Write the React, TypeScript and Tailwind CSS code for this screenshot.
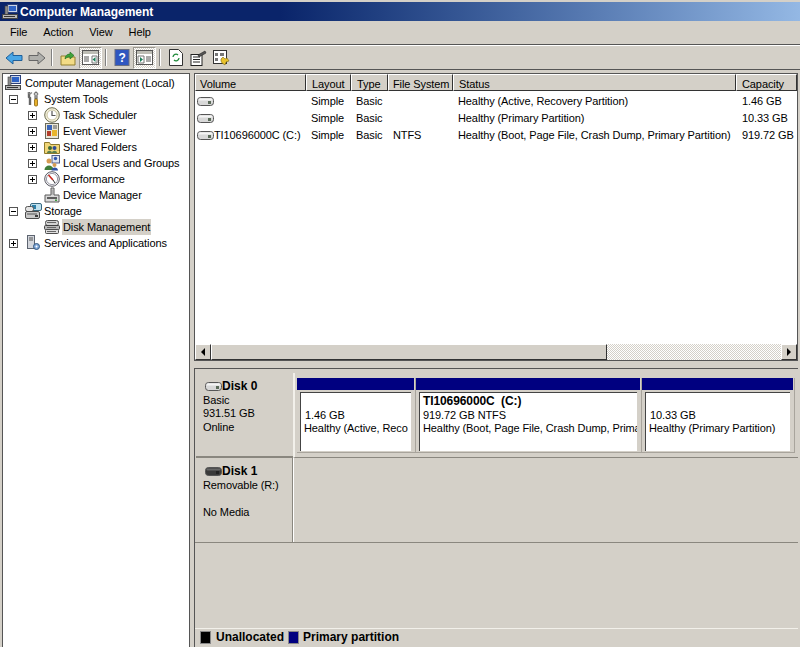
import type { ReactNode } from 'react'

const font = 'font-["Liberation_Sans",Arial,sans-serif]'

/** Small hard drive glyph used in the volume list and the disk labels */
function DriveIcon({ dark = false }: { dark?: boolean }) {
  return (
    <svg width="17" height="9" viewBox="0 0 17 9" className="shrink-0">
      <rect x="0.5" y="0.5" width="16" height="8" rx="3" fill={dark ? '#3a3a3a' : '#d8d8d8'} stroke="#555" />
      <rect x="1.5" y="1.5" width="14" height="2" rx="1" fill={dark ? '#666' : '#f4f4f4'} />
      <rect x="11" y="4" width="3" height="3" fill={dark ? '#222' : '#5a6a58'} />
    </svg>
  )
}

function Computer() {
  return (
    <svg width="17" height="16" viewBox="0 0 17 16">
      <rect x="5.5" y="0.5" width="10" height="8" fill="#c9d3e6" stroke="#2b3f78" />
      <rect x="7" y="2" width="7" height="5" fill="#2e62c4" />
      <rect x="3" y="2" width="3" height="10" fill="#8b8b8b" stroke="#444" strokeWidth="0.6" />
      <rect x="0.5" y="10.5" width="15" height="4" fill="#b9b9b9" stroke="#444" />
      <path d="M2 12.5h11" stroke="#333" />
    </svg>
  )
}

function Tools() {
  return (
    <svg width="16" height="16" viewBox="0 0 16 16">
      <path d="M4 1v5l1 1v7" stroke="#666" strokeWidth="2.4" fill="none" />
      <path d="M3 1.5 5 3 7 1.5" stroke="#888" strokeWidth="1.2" fill="none" />
      <path d="M11 1a2 2 0 0 1 1 3.5V8h-2V4.500A2 2 0 0 1 11 1z" fill="#c8c8c8" stroke="#555" />
      <rect x="9.500" y="8" width="3" height="7" rx="1" fill="#e7b02c" stroke="#8a6410" strokeWidth="0.8" />
    </svg>
  )
}

function Clock() {
  return (
    <svg width="16" height="16" viewBox="0 0 16 16">
      <circle cx="8" cy="8" r="7.300" fill="#f3efd9" stroke="#6d6d50" />
      <circle cx="8" cy="8" r="5" fill="#fff" stroke="#c9c4a0" />
      <path d="M8 4v4.500h3.500" stroke="#555" strokeWidth="1.200" fill="none" />
    </svg>
  )
}

function EventLog() {
  return (
    <svg width="16" height="16" viewBox="0 0 16 16">
      <rect x="1.500" y="0.500" width="13" height="15" fill="#e9e6d6" stroke="#6a6a5a" />
      <rect x="3" y="2" width="5" height="5" fill="#3c66b8" />
      <rect x="8" y="7" width="5" height="6" fill="#e8b52c" />
      <rect x="3" y="8" width="4" height="5" fill="#b33d2a" />
      <path d="M9 3h4M9 5h4" stroke="#555" />
    </svg>
  )
}

function SharedFolder() {
  return (
    <svg width="16" height="16" viewBox="0 0 16 16">
      <path d="M0.500 3.500h5l1 2h9v9h-15z" fill="#f0d678" stroke="#8f7a2c" />
      <circle cx="6" cy="9" r="2" fill="#3d6a35" />
      <circle cx="10.500" cy="9" r="2" fill="#2f4d9a" />
      <path d="M3 14c0-3 5-3 5 0zM8 14c0-3 5-3 5 0z" fill="#5a7f4d" />
    </svg>
  )
}

function Users() {
  return (
    <svg width="16" height="16" viewBox="0 0 16 16">
      <rect x="8" y="0.500" width="7.500" height="7.500" fill="#dfe4ef" stroke="#4c5a88" />
      <circle cx="11.500" cy="3.500" r="1.700" fill="#2f55ad" />
      <circle cx="5" cy="6" r="2.500" fill="#d69b52" />
      <path d="M0.500 15c0-6 9-6 9 0z" fill="#3f7d3a" />
      <circle cx="10.500" cy="10" r="2" fill="#d69b52" />
      <path d="M7.500 15.500c0-4 6.500-4 6.500 0z" fill="#2e4fa3" />
    </svg>
  )
}

function Gauge() {
  return (
    <svg width="16" height="16" viewBox="0 0 16 16">
      <circle cx="8" cy="8" r="7.300" fill="#fff" stroke="#55555f" />
      <circle cx="8" cy="8" r="5.600" fill="none" stroke="#9a9aa6" />
      <path d="M4.500 4 9 9" stroke="#c8281e" strokeWidth="1.600" />
      <path d="M9 9 11 12" stroke="#222" />
    </svg>
  )
}

function DeviceMgr() {
  return (
    <svg width="16" height="16" viewBox="0 0 16 16">
      <path d="M1 8h6V1h3v7h5v7H1z" fill="#d9d9d9" stroke="#5a5a5a" />
      <path d="M8 2.500v5" stroke="#888" />
      <path d="M3 11h10" stroke="#333" strokeWidth="1.500" />
      <rect x="11" y="12.500" width="2" height="1.500" fill="#3f9b3f" />
    </svg>
  )
}

function StorageIcon() {
  return (
    <svg width="17" height="16" viewBox="0 0 17 16">
      <rect x="5.500" y="0.500" width="11" height="7" rx="1.500" fill="#bfe1ee" stroke="#38687f" />
      <rect x="7" y="2" width="4" height="4" fill="#2a7fa8" />
      <rect x="0.500" y="3.500" width="8" height="5" rx="2" fill="#e3e3e3" stroke="#555" />
      <rect x="0.500" y="8.500" width="14" height="7" rx="1.500" fill="#c9c9c9" stroke="#4a4a4a" />
      <path d="M2 11h10" stroke="#555" />
      <rect x="10" y="12" width="3" height="2" fill="#3b3b3b" />
    </svg>
  )
}

function DiskMgmt() {
  return (
    <svg width="16" height="16" viewBox="0 0 16 16">
      <rect x="1.500" y="1.500" width="13" height="5" rx="2" fill="#d2d2d2" stroke="#4d4d4d" />
      <rect x="0.500" y="6.500" width="15" height="4" rx="1" fill="#b8b8b8" stroke="#3e3e3e" />
      <rect x="1.500" y="10.500" width="13" height="4" rx="1" fill="#dedede" stroke="#4d4d4d" />
      <path d="M3 3.500h9M3 8.500h9M3 12.500h9" stroke="#666" />
    </svg>
  )
}

function Services() {
  return (
    <svg width="16" height="16" viewBox="0 0 16 16">
      <rect x="2.500" y="0.500" width="7" height="13" fill="#d3d6dc" stroke="#5d6470" />
      <path d="M4 3h4M4 5h4" stroke="#555" />
      <circle cx="11.500" cy="11.500" r="3" fill="#7fa7d8" stroke="#34567f" />
      <circle cx="11.500" cy="11.500" r="1" fill="#fff" />
    </svg>
  )
}

/** Expand or collapse box in the tree */
function Box({ open }: { open?: boolean }) {
  return (
    <span className="relative block h-[9px] w-[9px] border border-[#555] bg-white">
      <span className="absolute left-[1px] top-[3px] h-px w-[5px] bg-black" />
      {!open && <span className="absolute left-[3px] top-[1px] h-[5px] w-px bg-black" />}
    </span>
  )
}

interface TreeRowProps {
  level: number
  box?: 'open' | 'closed'
  icon: ReactNode
  label: string
  selected?: boolean
}

function TreeRow({ level, box, icon, label, selected }: TreeRowProps) {
  const pad = level === 0 ? 'pl-[2px]' : level === 1 ? 'pl-[6px]' : 'pl-[25px]'
  return (
    <div className={`flex h-4 items-center ${pad}`}>
      {level > 0 && (
        <span className="flex w-[16px] shrink-0 items-center">{box && <Box open={box === 'open'} />}</span>
      )}
      <span className={`flex shrink-0 items-center ${level === 0 ? 'w-[19px]' : 'w-[18px]'}`}>{icon}</span>
      <span className={`whitespace-nowrap px-[1px] leading-4 ${selected ? 'bg-[#d4d0c8]' : ''}`}>{label}</span>
    </div>
  )
}

function ToolSep() {
  return <span className="mx-[3px] h-[17px] w-[2px] border-l border-r border-l-[#808080] border-r-white" />
}

function ToolBtn({ children, pressed }: { children: ReactNode; pressed?: boolean }) {
  return (
    <span
      className={`flex h-[22px] w-[23px] items-center justify-center ${
        pressed
          ? 'border border-b-white border-l-[#9a978f] border-r-white border-t-[#9a978f] bg-[repeating-conic-gradient(#d4d0c8_0%_25%,#ffffff_0%_50%)] bg-[length:2px_2px]'
          : ''
      }`}
    >
      {children}
    </span>
  )
}

function PaneIcon({ right }: { right?: boolean }) {
  return (
    <svg width="17" height="15" viewBox="0 0 17 15">
      <rect x="0.500" y="0.500" width="16" height="14" fill="#fff" stroke="#555" />
      <rect x="1" y="1" width="15" height="3" fill="#bdbdb5" />
      <path d={right ? 'M2 6h6v7H2z' : 'M10 6h5v7h-5z'} fill="#fff" stroke="#777" />
      <path d={right ? 'M10 7h5M10 9h5M10 11h5' : 'M2 7h5M2 9h5M2 11h5'} stroke="#555" />
      <path d={right ? 'M4 7l3 2.500-3 2.500z' : 'M13.500 7l-3 2.500 3 2.500z'} fill="#1b7f5a" />
    </svg>
  )
}

const headers = [
  { label: 'Volume', w: 'w-[111px]', pad: 'pl-[4px]' },
  { label: 'Layout', w: 'w-[45px]', pad: 'pl-[5px]' },
  { label: 'Type', w: 'w-[37px]', pad: 'pl-[5px]' },
  { label: 'File System', w: 'w-[65px]', pad: 'pl-[4px]' },
  { label: 'Status', w: 'w-[283px]', pad: 'pl-[5px]' },
  { label: 'Capacity', w: 'w-[61px]', pad: 'pl-[5px]' },
]

const rows = [
  { vol: '', layout: 'Simple', type: 'Basic', fs: '', status: 'Healthy (Active, Recovery Partition)', cap: '1.46 GB' },
  { vol: '', layout: 'Simple', type: 'Basic', fs: '', status: 'Healthy (Primary Partition)', cap: '10.33 GB' },
  {
    vol: 'TI10696000C (C:)',
    layout: 'Simple',
    type: 'Basic',
    fs: 'NTFS',
    status: 'Healthy (Boot, Page File, Crash Dump, Primary Partition)',
    cap: '919.72 GB',
  },
]

function Partition({ w, title, size, status }: { w: string; title?: string; size: string; status: string }) {
  return (
    <div className={`${w} flex h-[75px] shrink-0 flex-col border-b border-r border-b-[#a8a49c] border-r-[#a8a49c] pr-[1px]`}>
      <div className="h-[12px] shrink-0 bg-[#000080]" />
      {/* first line stays reserved so size and status sit at the same height in all partitions */}
      <div className="mx-[3px] mt-[2px] flex h-[59px] flex-col overflow-hidden whitespace-nowrap border-l border-t border-l-[#444] border-t-[#444] bg-white pl-[3px] pr-[1px] pt-[2px] leading-[13.500px]">
        <b className="h-[13.500px] shrink-0 text-[12px] leading-[13.500px]">{title}</b>
        <div className={title ? '' : 'pl-[1px]'}>{size}</div>
        <div>{status}</div>
      </div>
    </div>
  )
}

export default function App() {
  return (
    <div className={`${font} flex h-[647px] w-[800px] flex-col overflow-hidden bg-[#d4d0c8] text-[11px] tracking-[-0.1px] text-black`}>
      {/* title bar */}
      <div className="mt-[2px] flex h-[19px] shrink-0 items-center gap-[1px] bg-gradient-to-r from-[#0a246a] via-[#0a246a] via-35% to-[#94b8e4] pl-[2px]">
        <Computer />
        <span className="text-[12px] font-bold tracking-normal text-white">Computer Management</span>
      </div>
      {/* menu */}
      <div className="flex h-[24px] shrink-0 items-center gap-[16px] border-b border-b-[#555] pl-[10px]">
        <span>File</span>
        <span>Action</span>
        <span>View</span>
        <span>Help</span>
      </div>
      {/* toolbar */}
      <div className="flex h-[25px] shrink-0 items-center border-b border-t border-b-[#555] border-t-white pl-[2px]">
        <ToolBtn>
          <svg width="18" height="14" viewBox="0 0 18 14">
            <path d="M1 7l7-6v3.500h9v5H8V13z" fill="#49a6e6" stroke="#1f5f99" />
          </svg>
        </ToolBtn>
        <ToolBtn>
          <svg width="18" height="14" viewBox="0 0 18 14">
            <path d="M17 7l-7-6v3.500H1v5h9V13z" fill="#b0b0ac" stroke="#666" />
          </svg>
        </ToolBtn>
        <ToolSep />
        <ToolBtn>
          <svg width="16" height="16" viewBox="0 0 16 16">
            <path d="M1 6h5l1 1h8v8H1z" fill="#f3dc86" stroke="#93802f" />
            <path d="M5 9c0-3 2-5 5-5V2l4 3.500L10 9V7c-2 0-3.500 .5-5 2z" fill="#3fa33a" stroke="#1e6a1c" strokeWidth="0.600" />
          </svg>
        </ToolBtn>
        <ToolBtn pressed>
          <PaneIcon />
        </ToolBtn>
        <ToolSep />
        <ToolBtn>
          <svg width="16" height="17" viewBox="0 0 16 17">
            <rect x="1" y="0.500" width="14" height="16" fill="#2f56c0" stroke="#6a6f80" />
            <text x="4.500" y="13" fontSize="12" fontWeight="bold" fill="#fff" fontFamily="Liberation Sans">?</text>
          </svg>
        </ToolBtn>
        <ToolBtn pressed>
          <PaneIcon right />
        </ToolBtn>
        <ToolSep />
        <ToolBtn>
          <svg width="14" height="17" viewBox="0 0 14 17">
            <path d="M0.500 0.500h9l4 4v12h-13z" fill="#fff" stroke="#333" />
            <path d="M4 8a3 3 0 0 1 5-2M10 9a3 3 0 0 1-5 2" stroke="#1f8a3a" strokeWidth="1.300" fill="none" />
          </svg>
        </ToolBtn>
        <ToolBtn>
          <svg width="17" height="16" viewBox="0 0 17 16">
            <rect x="1" y="4.500" width="11" height="11" fill="#fff" stroke="#222" />
            <path d="M3 7h7M3 9.500h7M3 12h7" stroke="#222" />
            <path d="M8 5l7-4 1 2-7 4z" fill="#555" stroke="#222" strokeWidth="0.600" />
          </svg>
        </ToolBtn>
        <ToolBtn>
          <svg width="17" height="16" viewBox="0 0 17 16">
            <rect x="0.500" y="0.500" width="13" height="13" fill="#fff" stroke="#333" />
            <path d="M2 3h3v3H2zM7 3h4v3H7zM2 8h3v3H2z" fill="#777" />
            <path d="M8 9l2-2 2 2 2-1 2 3-3 1-1 3-3-2-1-2z" fill="#e8c22d" stroke="#7f6a10" strokeWidth="0.600" />
          </svg>
        </ToolBtn>
      </div>

      {/* panes */}
      <div className="flex min-h-0 flex-1 pt-[3px]">
        {/* tree */}
        <div className="ml-[2px] w-[188px] shrink-0 border-l border-r border-t border-l-[#555] border-r-[#555] border-t-[#555] bg-white pt-[1px]">
          <TreeRow level={0} icon={<Computer />} label="Computer Management (Local)" />
          <TreeRow level={1} box="open" icon={<Tools />} label="System Tools" />
          <TreeRow level={2} box="closed" icon={<Clock />} label="Task Scheduler" />
          <TreeRow level={2} box="closed" icon={<EventLog />} label="Event Viewer" />
          <TreeRow level={2} box="closed" icon={<SharedFolder />} label="Shared Folders" />
          <TreeRow level={2} box="closed" icon={<Users />} label="Local Users and Groups" />
          <TreeRow level={2} box="closed" icon={<Gauge />} label="Performance" />
          <TreeRow level={2} icon={<DeviceMgr />} label="Device Manager" />
          <TreeRow level={1} box="open" icon={<StorageIcon />} label="Storage" />
          <TreeRow level={2} icon={<DiskMgmt />} label="Disk Management" selected />
          <TreeRow level={1} box="closed" icon={<Services />} label="Services and Applications" />
        </div>

        {/* right side */}
        <div className="ml-[4px] flex w-[604px] shrink-0 flex-col">
          {/* volume list */}
          <div className="flex h-[288px] shrink-0 flex-col border border-[#555] bg-white">
            <div className="flex h-[17px] shrink-0 bg-[#d4d0c8]">
              {headers.map((h) => (
                <div
                  key={h.label}
                  className={`${h.w} ${h.pad} flex shrink-0 items-center whitespace-nowrap border border-b-[#333] border-l-white border-r-[#333] border-t-white pt-[3px]`}
                >
                  {h.label}
                </div>
              ))}
            </div>
            <div className="flex-1 pt-[2px]">
              {rows.map((r, i) => (
                <div key={i} className="flex h-[17px] items-center whitespace-nowrap">
                  <div className="flex w-[111px] shrink-0 items-center pl-[2px]">
                    <DriveIcon />
                    <span>{r.vol}</span>
                  </div>
                  <div className="w-[45px] shrink-0 pl-[5px]">{r.layout}</div>
                  <div className="w-[37px] shrink-0 pl-[5px]">{r.type}</div>
                  <div className="w-[65px] shrink-0 pl-[5px]">{r.fs}</div>
                  <div className="w-[283px] shrink-0 pl-[5px]">{r.status}</div>
                  <div className="w-[61px] shrink-0 pl-[6px]">{r.cap}</div>
                </div>
              ))}
            </div>
            {/* horizontal scrollbar */}
            <div className="flex h-[16px] shrink-0 bg-[repeating-conic-gradient(#d4d0c8_0%_25%,#ffffff_0%_50%)] bg-[length:2px_2px]">
              <div className="flex h-4 w-[16px] shrink-0 items-center justify-center border border-b-[#333] border-l-white border-r-[#333] border-t-white bg-[#d4d0c8]">
                <span className="h-0 w-0 border-b-[4px] border-r-[4px] border-t-[4px] border-b-transparent border-r-black border-t-transparent" />
              </div>
              <div className="h-4 w-[396px] shrink-0 border border-b-[#333] border-l-white border-r-[#333] border-t-white bg-[#d4d0c8]" />
              <div className="flex-1" />
              <div className="flex h-4 w-[16px] shrink-0 items-center justify-center border border-b-[#333] border-l-white border-r-[#333] border-t-white bg-[#d4d0c8]">
                <span className="h-0 w-0 border-b-[4px] border-l-[4px] border-t-[4px] border-b-transparent border-l-black border-t-transparent" />
              </div>
            </div>
          </div>

          {/* graphical view */}
          <div className="mt-[7px] flex min-h-0 flex-1 flex-col border-l border-t border-l-[#555] border-t-[#555] pt-[4px]">
            <div className="flex h-[85px] shrink-0">
              <div className="ml-[1px] h-[85px] w-[97px] shrink-0 border-b-2 border-b-[#8a877f] pl-[7px] pt-[7px] leading-[13.500px]">
                <div className="ml-[2px] flex items-center">
                  <DriveIcon />
                  <b className="text-[12px] tracking-normal">Disk 0</b>
                </div>
                <div>Basic</div>
                <div>931.51 GB</div>
                <div>Online</div>
              </div>
              <div className="flex h-[85px] flex-1 border-b border-l-2 border-b-[#8a877f] border-l-[#f2f0ea] pl-[2px] pt-[5px]">
                <Partition w="w-[119px]" size="1.46 GB" status="Healthy (Active, Reco" />
                <Partition
                  w="w-[226px]"
                  title={'TI10696000C\u00a0\u00a0(C:)'}
                  size="919.72 GB NTFS"
                  status="Healthy (Boot, Page File, Crash Dump, Prima"
                />
                <Partition w="w-[153px]" size="10.33 GB" status="Healthy (Primary Partition)" />
              </div>
            </div>
            <div className="flex h-[85px] shrink-0 border-b border-b-[#8a877f]">
              <div className="ml-[1px] h-[85px] w-[97px] shrink-0 border-r border-[#8a877f] pl-[7px] pt-[7px] leading-[13.500px]">
                <div className="ml-[2px] flex items-center">
                  <DriveIcon dark />
                  <b className="text-[12px] tracking-normal">Disk 1</b>
                </div>
                <div>Removable (R:)</div>
                <div className="mt-[13.500px]">No Media</div>
              </div>
              <div className="flex-1 border-l border-l-white" />
            </div>
            <div className="flex-1" />
            {/* legend */}
            <div className="flex h-[19px] shrink-0 items-center border-t border-t-[#f2f0ea] pb-[2px] pl-[5px] text-[12px] font-bold tracking-normal">
              <span className="h-[13px] w-[11px] border border-[#888] bg-black" />
              <span className="ml-[5px]">Unallocated</span>
              <span className="ml-[4px] h-[13px] w-[11px] border border-[#888] bg-[#000080]" />
              <span className="ml-[4px]">Primary partition</span>
            </div>
          </div>
        </div>
      </div>
    </div>
  )
}
